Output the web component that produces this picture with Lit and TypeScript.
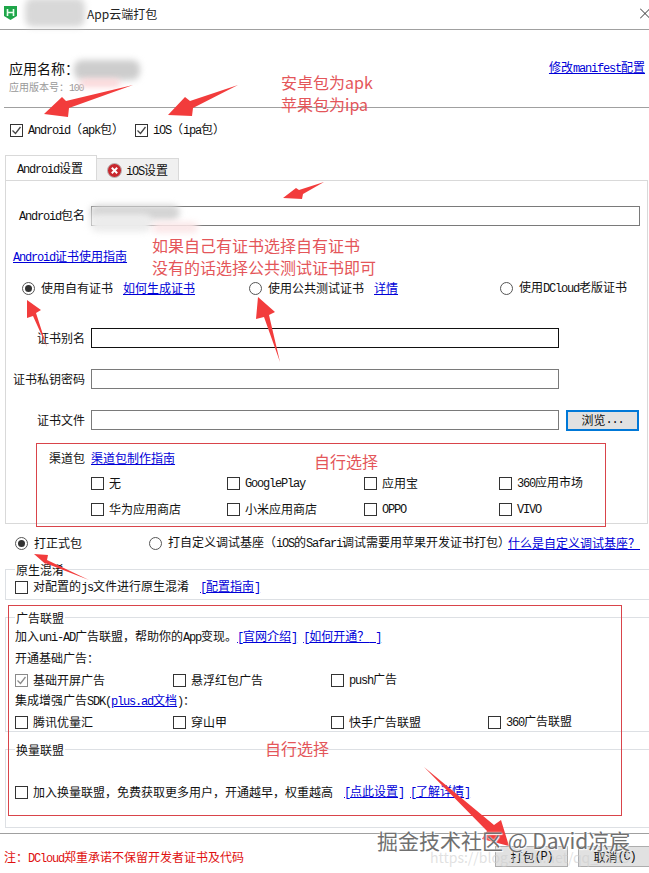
import { LitElement, html, css, svg } from "lit";
import { customElement } from "lit/decorators.js";

const t = (s: string) =>
  s.split(/([A-Za-z0-9.\-\[\]() ]+)/).map((p, i) => (i % 2 ? html`<span class="m">${p}</span>` : p));

const box = (checked = false, grey = false) => html`<svg class="cb" width="13" height="13" viewBox="0 0 13 13">
  <rect x=".5" y=".5" width="12" height="12" fill="#fff" stroke=${grey ? "#8a8a8a" : "#333"}></rect>
  ${checked ? svg`<path d="M2.5 6.5l3 3 5-6.5" fill="none" stroke=${grey ? "#8a8a8a" : "#444"} stroke-width="1.3"></path>` : ""}
</svg>`;
const radio = (on = false) => html`<svg class="cb" width="13" height="13" viewBox="0 0 13 13">
  <circle cx="6.5" cy="6.5" r="6" fill="#fff" stroke="#555"></circle>
  ${on ? svg`<circle cx="6.5" cy="6.5" r="3.5" fill="#333"></circle>` : ""}
</svg>`;
const chk = (label: string, checked = false, grey = false) =>
  html`<label class="opt">${box(checked, grey)}<span>${t(label)}</span></label>`;

const arrows = [
  "44,114 62,97 66,101 133,85 69,108 68,117",
  "168,115 185,97 190,101 238,85 193,108 192,116",
  "283,198 296,188 299,190 324,182 303,194 302,199",
  "27,300 41,310 36,313 47,347 33,316 27,318",
  "258,297 275,312 269,315 280,362 264,317 256,319",
  "34,554 48,555 47,560 89,580 45,563 50,568",
  "424,767 494,825 501,820 509,846 482,839 487,831",
];

@customElement("app-root")
export class AppRoot extends LitElement {
  static styles = css`
    :host { display: block; width: 649px; height: 873px; }
    * { box-sizing: border-box; }
    .dialog { position: relative; width: 649px; height: 873px; overflow: hidden; background: #fff; color: #111;
      font: 12px/16px "Noto Sans CJK SC", "Liberation Sans", sans-serif; }
    .m { font-family: "Liberation Mono", monospace; letter-spacing: -1.2px; }
    a { color: #0000d8; text-decoration: underline; white-space: nowrap; }
    .title { height: 30px; border-bottom: 1px solid #a0a0a0; display: flex; align-items: center; padding: 0 0 3px 4px; }
    .title .name { margin-left: 70px; margin-top: 1px; font-size: 12px; color: #222; }
    .title .x { margin-left: auto; margin-top: 1px; }
    .head { height: 78px; margin-left: 4px; border-bottom: 1px solid #a0a0a0; padding: 28px 4px 0 5px; display: flex; justify-content: space-between; }
    .appname { font-size: 14px; line-height: 20px; }
    .ver { font-size: 10px; line-height: 12px; margin-top: 3px; color: #999; }
    .headlink { margin-top: 1px; }
    .platforms { height: 48px; padding: 14px 0 0 10px; display: grid; grid-template-columns: 125px auto; justify-content: start; }
    .opt { display: flex; align-items: center; gap: 5px; height: 16px; white-space: nowrap; }
    .cb { flex: none; display: block; }
    .tabs { display: flex; align-items: flex-end; height: 24px; margin-left: 5px; }
    .tab { height: 25px; width: 92px; border: 1px solid #d9d9d9; border-bottom: 0; background: #fff; padding: 4px 0 0 11px; position: relative; z-index: 1; }
    .tab.off { height: 22px; width: 82px; background: #f0f0f0; border-left: 0; padding: 2px 0 0 10px; display: flex; align-items: center; gap: 4px; }
    .pane { margin-left: 5px; width: 643px; height: 344px; border: 1px solid #d9d9d9; }
    .row { display: flex; align-items: center; height: 20px; }
    .lab { width: 79px; text-align: right; margin-right: 6px; white-space: nowrap; }
    .in { height: 20px; border: 1px solid #7a7a7a; background: #fff; }
    .in.pkg { width: 549px; }
    .in.cert { width: 468px; }
    .in.focus { border-color: #111; }
    .r-pkg { margin-top: 25px; }
    .guide { margin-top: 22px; padding-left: 7px; height: 16px; }
    .radios { margin-top: 16px; padding-left: 16px; display: grid; grid-template-columns: 227px 251px auto; height: 16px; }
    .gap-link { margin-left: 10px; }
    .opt.rd { gap: 6px; }
    .opt.rd a { margin-left: 4px; }
    .form { margin-top: 32px; display: grid; gap: 21px; }
    .browse { margin-left: 7px; width: 73px; height: 21px; border: 2px solid #0078d7; background: #e1e1e1; display: flex; align-items: center; justify-content: center; }
    .channel { margin-top: 20px; padding-left: 43px; height: 16px; display: flex; gap: 6px; }
    .channels { margin-top: 9px; padding-left: 85px; display: grid; grid-template-columns: 136px 137px 135px auto; row-gap: 10px; }
    .build { margin-top: 11px; height: 16px; padding-left: 15px; display: flex; align-items: center; }
    .build .a { width: 134px; }
    .build .b { width: 359px; }
    .group { margin-left: 5px; width: 650px; border: 1px solid #dde0e4; border-right: 0; position: relative; }
    .legend { width: fit-content; margin: -8px 0 0 9px; padding: 0 1px; background: #fff; height: 16px; }
    .g1 { margin-top: 18px; height: 31px; }
    .g1 .line { margin: 1px 0 0 9px; }
    .g2 { margin-top: 17px; height: 115px; }
    .g3 { margin-top: 17px; height: 79px; }
    .ln { margin-left: 9px; height: 16px; white-space: nowrap; }
    .ad1 { margin-top: 2px; }
    .ad2 { margin-top: 6px; }
    .ad4 { margin-top: 4px; }
    .cols { margin: 6px 0 0 9px; display: grid; grid-template-columns: 158px 158px 157px auto; }
    .g3 .line { margin: 26px 0 0 9px; }
    .g3 .opt a { margin-left: 6px; }
    .g3 .opt a + a { margin-left: 1px; }
    .g1 .opt a { margin-left: 6px; }
    .footer { margin-top: 5px; height: 40px; border-top: 1px solid #a0a0a0; padding: 12px 0 0 4px; display: flex; gap: 10px; width: 651px; }
    .note { color: #e01010; margin-right: auto; line-height: 22px; }
    .btn { width: 73px; height: 21px; background: #e1e1e1; border: 1px solid #adadad; display: flex; align-items: center; justify-content: center; }
    .blob { position: absolute; filter: blur(3px); background: #cfcfcf; border-radius: 8px; }
    .blob.b1 { left: 25px; top: -2px; width: 60px; height: 29px; background: #d8d8d8; }
    .blob.b2 { left: 74px; top: 60px; width: 66px; height: 20px; background: #cdcdcd; }
    .blob.b2p { left: 80px; top: 79px; width: 40px; height: 8px; background: #fbd5d7; }
    .blob.b3 { left: 90px; top: 205px; width: 90px; height: 15px; background: #d4d4d4; }
    .blob.b4 { left: 90px; top: 214px; width: 62px; height: 18px; background: #ececec; }
    .blob.b5 { left: 152px; top: 222px; width: 46px; height: 11px; background: #fbe7e8; }
    .anno { position: absolute; inset: 0; pointer-events: none; }
    .note-red { position: absolute; color: #e4565a; font-size: 16px; line-height: 22px; white-space: nowrap; }
    .n1 { left: 281px; top: 71px; }
    .n2 { left: 152px; top: 234px; }
    .n3 { left: 314px; top: 450px; }
    .n4 { left: 265px; top: 737px; }
    .redbox { position: absolute; border: 1px solid #d9444a; }
    .rb1 { left: 36px; top: 443px; width: 570px; height: 84px; }
    .rb2 { left: 8px; top: 605px; width: 614px; height: 211px; }
    .wm { position: absolute; left: 377px; top: 826px; font-size: 21px; line-height: 28px; color: #707070; white-space: nowrap; text-shadow: 0 0 2px #fff, 1px 1px 1px #fff; }
    .wm2 { position: absolute; left: 430px; top: 849px; font-size: 14px; line-height: 16px; color: rgba(205,205,205,.6); white-space: nowrap; }
  `;

  render() {
    return html`<div class="dialog">
      <div class="title">
        <svg width="13" height="14" viewBox="0 0 13 14"><path d="M0 0h13v10l-6.5 4L0 10z" fill="#1fa64a"></path><path d="M3.5 3v7M9.5 3v7M3.5 6.5h6" stroke="#eafff0" stroke-width="1.6" fill="none"></path></svg>
        <span class="name">App云端打包</span>
        <svg class="x" width="9" height="11" viewBox="0 0 9 11"><path d="M0 .5l10 10M10 .5L0 10.5" stroke="#333" fill="none"></path></svg>
      </div>
      <div class="head">
        <div>
          <div class="appname">应用名称：</div>
          <div class="ver">${t("应用版本号：100")}</div>
        </div>
        <a class="headlink" href="#">${t("修改manifest配置")}</a>
      </div>
      <div class="platforms">
        ${chk("Android（apk包）", true)}
        ${chk("iOS（ipa包）", true)}
      </div>
      <div class="tabs">
        <div class="tab">${t("Android设置")}</div>
        <div class="tab off">
          <svg width="15" height="15" viewBox="0 0 15 15"><circle cx="7.5" cy="7.5" r="7" fill="#c8282e" stroke="#b9b9b9"></circle><path d="M4.8 4.8l5.4 5.4M10.2 4.8l-5.4 5.4" stroke="#fff" stroke-width="2"></path></svg>
          <span>${t("iOS设置")}</span>
        </div>
      </div>
      <div class="pane">
        <div class="row r-pkg"><div class="lab">${t("Android包名")}</div><div class="in pkg"></div></div>
        <div class="guide"><a href="#">${t("Android证书使用指南")}</a></div>
        <div class="radios">
          <div class="opt rd">${radio(true)}<span>使用自有证书</span><a class="gap-link" href="#">如何生成证书</a></div>
          <div class="opt rd">${radio()}<span>使用公共测试证书</span><a class="gap-link" href="#">详情</a></div>
          <div class="opt rd">${radio()}<span>${t("使用DCloud老版证书")}</span></div>
        </div>
        <div class="form">
          <div class="row"><div class="lab">证书别名</div><div class="in cert focus"></div></div>
          <div class="row"><div class="lab">证书私钥密码</div><div class="in cert"></div></div>
          <div class="row"><div class="lab">证书文件</div><div class="in cert"></div><div class="browse">${t("浏览...")}</div></div>
        </div>
        <div class="channel"><span>渠道包</span><a href="#">渠道包制作指南</a></div>
        <div class="channels">
          ${chk("无")}${chk("GooglePlay")}${chk("应用宝")}${chk("360应用市场")}
          ${chk("华为应用商店")}${chk("小米应用商店")}${chk("OPPO")}${chk("VIVO")}
        </div>
      </div>
      <div class="build">
        <div class="opt rd a">${radio(true)}<span>打正式包</span></div>
        <div class="opt rd b">${radio()}<span>${t("打自定义调试基座（iOS的Safari调试需要用苹果开发证书打包）")}</span></div>
        <a href="#">什么是自定义调试基座？</a>
      </div>
      <div class="group g1">
        <div class="legend">原生混淆</div>
        <div class="opt line">${box()}<span>${t("对配置的js文件进行原生混淆")}</span><a href="#">${t("[配置指南]")}</a></div>
      </div>
      <div class="group g2">
        <div class="legend">广告联盟</div>
        <div class="ln ad1">${t("加入uni-AD广告联盟，帮助你的App变现。")}<a href="#">${t("[官网介绍]")}</a><span class="m"> </span><a href="#">${t("[如何开通？ ]")}</a></div>
        <div class="ln ad2">开通基础广告：</div>
        <div class="cols">${chk("基础开屏广告", true, true)}${chk("悬浮红包广告")}${chk("push广告")}</div>
        <div class="ln ad4">${t("集成增强广告SDK(")}<a href="#">${t("plus.ad文档")}</a>${t(")")}：</div>
        <div class="cols">${chk("腾讯优量汇")}${chk("穿山甲")}${chk("快手广告联盟")}${chk("360广告联盟")}</div>
      </div>
      <div class="group g3">
        <div class="legend">换量联盟</div>
        <div class="opt line">${box()}<span>加入换量联盟，免费获取更多用户，开通越早，权重越高</span><a href="#">${t("[点此设置]")}</a><a href="#">${t("[了解详情]")}</a></div>
      </div>
      <div class="footer">
        <div class="note">${t("注：DCloud郑重承诺不保留开发者证书及代码")}</div>
        <div class="btn">${t("打包(P)")}</div>
        <div class="btn">${t("取消(C)")}</div>
      </div>

      <div class="blob b1"></div><div class="blob b2"></div><div class="blob b2p"></div>
      <div class="blob b3"></div><div class="blob b4"></div><div class="blob b5"></div>
      <div class="redbox rb1"></div><div class="redbox rb2"></div>
      <div class="note-red n1">安卓包为apk<br />苹果包为ipa</div>
      <div class="note-red n2">如果自己有证书选择自有证书<br />没有的话选择公共测试证书即可</div>
      <div class="note-red n3">自行选择</div>
      <div class="note-red n4">自行选择</div>
      <svg class="anno" width="649" height="873" viewBox="0 0 649 873">
        ${arrows.map((p) => svg`<polygon points=${p} fill="#f23c3c"></polygon>`)}
      </svg>
      <div class="wm">掘金技术社区 @ David凉宸</div>
      <div class="wm2">https://blog.csdn.net/qq_4163</div>
    </div>`;
  }
}
